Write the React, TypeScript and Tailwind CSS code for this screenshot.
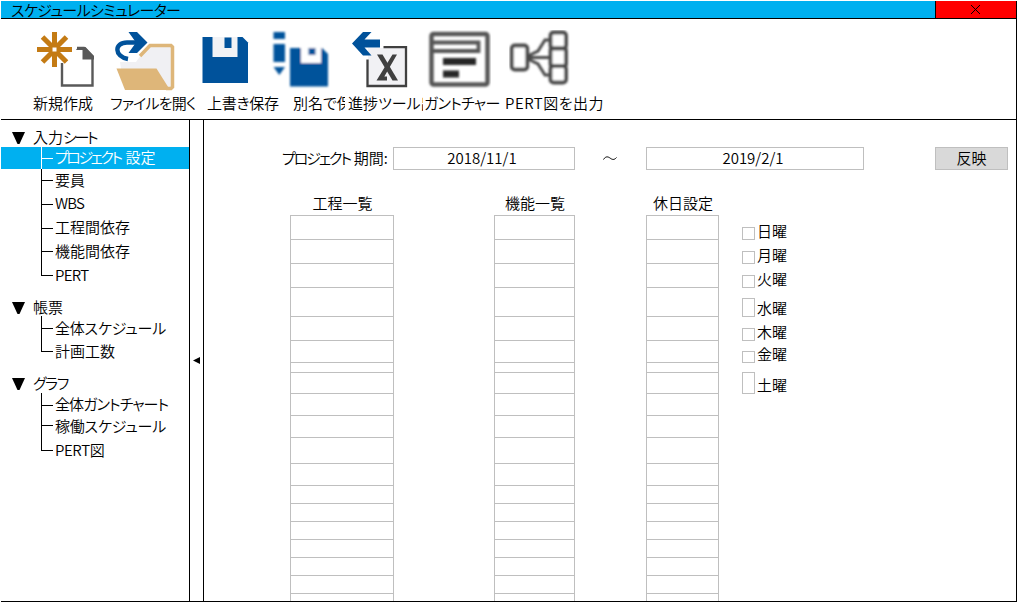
import type { ReactNode } from "react";

const NAVY = "#00529b";

function NewIcon() {
  return (
    <svg width="60" height="60" viewBox="36 30 60 60" className="block shrink-0">
      <path d="M77 48 H84 L92.500 56.500 V85.500 H62 V63" fill="none" stroke="#595959" strokeWidth="2.400" />
      <path d="M78 47 H85.500 L94 56 V59.500 H82.500 V50 H76 Z" fill="#595959" />
      <g stroke="#c47b14" strokeWidth="5">
        <path d="M54.500 32 V46 M54.500 53 V67 M37 49.500 H51 M58 49.500 H72" />
        <path d="M42.500 37 L52 46.500 M66.500 37 L57 46.500 M42.500 62 L52 52.500 M66.500 62 L57 52.500" />
      </g>
      <rect x="51.500" y="46.500" width="6" height="6" fill="#fff" stroke="#c47b14" strokeWidth="2" />
    </svg>
  );
}

function OpenIcon() {
  return (
    <svg width="62" height="62" viewBox="114 29 62 62" className="block shrink-0">
      <path d="M120 61 L136 61 L148 44 H172 V87 H124 Z" fill="#f0f0f3" />
      <path d="M140 55 L150 44.500 H171 L172.500 46 V86 L171 87.500 H166" fill="none" stroke="#deb679" strokeWidth="3.500" />
      <path d="M116.500 67.500 H156.500 L170 89 H125 Z" fill="#deb679" />
      <path d="M128 58 C114 55.500 114 41.500 127 41.500 H142" fill="none" stroke={NAVY} strokeWidth="4.400" />
      <path d="M128.500 31 H137 L147.500 41.500 L137 52 H128.500 L136 41.500 Z" fill={NAVY} />
    </svg>
  );
}

function SaveIcon() {
  return (
    <svg width="50" height="60" viewBox="201 30 50 60" className="block shrink-0">
      <path d="M202.500 37 H242.500 L248 42.500 V83 H202.500 Z" fill={NAVY} />
      <path d="M212.500 37 H237.500 V57 H212.500 Z" fill="#f1f2f5" />
      <rect x="224.500" y="37.500" width="7" height="10.500" fill={NAVY} />
    </svg>
  );
}

function SaveAsIcon() {
  return (
    <svg width="60" height="60" viewBox="271 30 60 60" className="block shrink-0">
      <defs>
        <filter id="saveSoft"><feGaussianBlur stdDeviation="0.9" /></filter>
      </defs>
      <g filter="url(#saveSoft)">
        <path d="M290 48 H322 L328 54 V86.500 H290 Z" fill={NAVY} />
        <path d="M301 46 H321 V63 H301 Z" fill="#fff" />
        <rect x="308.500" y="48" width="7" height="7" fill={NAVY} />
        <rect x="273.500" y="32" width="11.500" height="7" fill={NAVY} />
        <rect x="273.500" y="44" width="11.500" height="18" fill={NAVY} />
        <path d="M273.500 67 H285 L279.300 75 Z" fill={NAVY} />
      </g>
    </svg>
  );
}

function ProgressIcon() {
  return (
    <svg width="60" height="60" viewBox="351 30 60 60" className="block shrink-0">
      <rect x="368" y="48" width="38" height="38" fill="#f1f1f4" />
      <path d="M383.500 47.200 H406 V86 H367.500 V59.500" fill="none" stroke="#404040" strokeWidth="2.300" />
      <path d="M352 43.500 L363 32 H371.500 L364.500 39.500 H380 V47.500 H364.500 L371.500 55.500 H363 Z" fill={NAVY} />
      <path d="M377 54.500 H382.500 L398 80.500 H392.500 Z" fill="#404040" />
      <path d="M392.500 54.500 H397 L382 80.500 H376.500 Z M380 76.500 H387 V80.500 H378 Z" fill="#404040" />
    </svg>
  );
}

function GanttIcon() {
  return (
    <svg width="64" height="60" viewBox="427 30 64 60" className="block shrink-0">
      <defs>
        <filter id="ganttSoft"><feGaussianBlur stdDeviation="0.9" /></filter>
      </defs>
      <g filter="url(#ganttSoft)" fill="none" stroke="#555">
        <rect x="431.500" y="34" width="56" height="50.500" rx="2" strokeWidth="4.400" />
        <path d="M431 42.500 H478.500 V51 H431" strokeWidth="3.800" />
        <path d="M443 61.500 H476 M443 74 H459" strokeWidth="7" stroke="#262626" />
      </g>
    </svg>
  );
}

function PertIcon() {
  return (
    <svg width="62" height="60" viewBox="509 30 62 60" className="block shrink-0">
      <defs>
        <filter id="pertSoft"><feGaussianBlur stdDeviation="0.9" /></filter>
      </defs>
      <g filter="url(#pertSoft)" fill="none" stroke="#484848" strokeWidth="3.800">
        <path d="M528 56 L538 51 L545 40 H551 M528 57.500 H551 M528 59 L538 64 L545 75 H551" strokeWidth="3" />
        <rect x="511.800" y="45.500" width="15.500" height="24" rx="3" fill="#fff" />
        <rect x="550.500" y="32.500" width="15.500" height="16" rx="3" fill="#fff" />
        <rect x="550.500" y="48.500" width="15.500" height="17.500" rx="2" fill="#fff" />
        <rect x="550.500" y="66" width="15.500" height="16.500" rx="3" fill="#fff" />
      </g>
    </svg>
  );
}

type Tool = { label: string; icon: ReactNode; tile: string; iconPad: string; text: string };

const tools: Tool[] = [
  { label: "新規作成", icon: <NewIcon />, tile: "w-[77px]", iconPad: "pl-[3px]", text: "w-[77px]" },
  { label: "ファイルを開く", icon: <OpenIcon />, tile: "w-[90px]", iconPad: "pl-[4px]", text: "w-[90px] tracking-[-0.8px]" },
  { label: "上書き保存", icon: <SaveIcon />, tile: "w-[70px]", iconPad: "pl-px", text: "ml-[7px] w-[77px] tracking-[-0.3px]" },
  { label: "別名で保", icon: <SaveAsIcon />, tile: "w-[78px]", iconPad: "pl-px", text: "ml-[23px] w-[52px] overflow-hidden" },
  { label: "進捗ツール出", icon: <ProgressIcon />, tile: "w-[76px]", iconPad: "pl-[3px]", text: "w-[75px] overflow-hidden" },
  { label: "ガントチャー", icon: <GanttIcon />, tile: "w-[81px]", iconPad: "pl-[3px]", text: "w-[80px] tracking-[-0.7px]" },
  { label: "PERT図を出力", icon: <PertIcon />, tile: "w-[110px]", iconPad: "pl-[4px]", text: "w-[110px] tracking-[0.5px]" },
];

type Node = { label: ReactNode; row: string; stem: string; text?: string; selected?: boolean };
type Section = { label: ReactNode; head: string; nodes: Node[] };

const sections: Section[] = [
  {
    label: <>入力<span className="tracking-[-2.400px]">シート</span></>,
    head: "mt-[9px] h-[18px]",
    nodes: [
      {
        label: <><span className="mr-[5px] tracking-[-2.500px]">プロジェクト</span>設定</>,
        row: "h-[22px]",
        stem: "h-[12px]",
        selected: true,
      },
      { label: "要員", row: "h-[23px]", stem: "h-[12px]" },
      { label: "WBS", row: "h-[24px]", stem: "h-[13px]", text: "tracking-[-0.8px]" },
      { label: "工程間依存", row: "h-[24px]", stem: "h-[13px]" },
      { label: "機能間依存", row: "h-[24px]", stem: "h-[12px]" },
      { label: "PERT", row: "h-[24px]", stem: "h-[12px]", text: "tracking-[-0.7px]" },
    ],
  },
  {
    label: "帳票",
    head: "mt-[11px] h-[18px] -mb-px",
    nodes: [
      { label: "全体スケジュール", row: "h-[24px]", stem: "h-[13px]", text: "pt-[2px] tracking-[-0.2px]" },
      { label: "計画工数", row: "h-[24px]", stem: "h-[12px]" },
    ],
  },
  {
    label: <span className="tracking-[-1.400px]">グラフ</span>,
    head: "mt-[10px] h-[19px]",
    nodes: [
      { label: "全体ガントチャート", row: "h-[23px]", stem: "h-[13px]", text: "tracking-[-0.9px]" },
      { label: "稼働スケジュール", row: "h-[22px]", stem: "h-[10px]", text: "tracking-[-0.2px]" },
      { label: "PERT図", row: "h-[25px]", stem: "h-[13px]", text: "tracking-[-0.4px]" },
    ],
  },
];

const rowHeights = [
  "h-[24px]", "h-[24px]", "h-[24px]", "h-[29px]", "h-[24px]", "h-[22px]", "h-[10px]", "h-[21px]", "h-[22px]",
  "h-[22px]", "h-[26px]", "h-[22px]", "h-[18px]", "h-[18px]", "h-[18px]", "h-[18px]", "h-[18px]", "h-[18px]", "h-[8px]",
];

const lists = [
  { title: "工程一覧", width: "w-[104px]", gap: "" },
  { title: "機能一覧", width: "w-[81px]", gap: "ml-[100px]" },
  { title: "休日設定", width: "w-[73px]", gap: "ml-[71px]" },
];

const days = [
  { label: "日曜", row: "h-[24px]", box: "mt-[7px] h-[13px]", text: "mt-0" },
  { label: "月曜", row: "h-[24px]", box: "mt-[7px] h-[13px]", text: "mt-0" },
  { label: "火曜", row: "h-[24px]", box: "mt-[7px] h-[13px]", text: "mt-0" },
  { label: "水曜", row: "h-[29px]", box: "mt-[6px] h-[19px]", text: "mt-[5px]" },
  { label: "木曜", row: "h-[24px]", box: "mt-[7px] h-[13px]", text: "mt-0" },
  { label: "金曜", row: "h-[22px]", box: "mt-[6px] h-[12px]", text: "mt-[-2px]" },
  { label: "土曜", row: "h-[32px]", box: "mt-[5px] h-[22px]", text: "mt-[7px]" },
];

function TreeSection({ section }: { section: Section }) {
  return (
    <div>
      <div className={`flex items-center pl-[11px] ${section.head}`}>
        <svg width="13" height="12" viewBox="0 0 13 12" className="block">
          <path d="M0 0 H13 L7.500 12 H5.500 Z" fill="#000" />
        </svg>
        <span className="ml-[8px] pb-[2px]">{section.label}</span>
      </div>
      {section.nodes.map((node, i) => {
        const line = node.selected ? "border-white" : "border-black";
        return (
          <div
            key={i}
            className={`flex pl-[40px] ${node.row} ${node.selected ? "bg-[#00b0f0] text-white" : ""}`}
          >
            <div className="flex w-[12px] shrink-0 flex-col">
              <div className={`shrink-0 border-b border-l ${line} ${node.stem}`} />
              {i < section.nodes.length - 1 && <div className={`grow border-l ${line}`} />}
            </div>
            <span className={`ml-[2px] self-center pb-[2px] ${node.text ?? ""}`}>{node.label}</span>
          </div>
        );
      })}
    </div>
  );
}

export default function App() {
  return (
    <div className="h-[602px] w-[1017px] overflow-hidden bg-white pl-px pt-px font-['Noto_Sans_CJK_JP',sans-serif] text-[15px] leading-[18px] font-[350] whitespace-nowrap text-black [font-feature-settings:'palt']">
      <div className="flex h-[601px] flex-col border-r border-b border-black">
        <header className="flex h-[18px] shrink-0 border-b border-black bg-[#00b0f0]">
          <h1 className="grow pl-[10px] font-[350] tracking-[-0.600px]">スケジュールシミュレーター</h1>
          <button className="flex w-[81px] items-center justify-center border-l border-black bg-[#ff0000] pr-px" aria-label="閉じる">
            <svg width="9" height="9" viewBox="0 0 9 9" className="block">
              <path d="M0 0 L9 9 M9 0 L0 9" stroke="#000" strokeWidth="1" />
            </svg>
          </button>
        </header>

        <nav className="flex h-[101px] shrink-0 border-b border-black pl-[32px]">
          {tools.map((tool) => (
            <button key={tool.label} className={`flex shrink-0 flex-col items-start ${tool.tile}`}>
              <span className={`flex h-[72px] items-start pt-[11px] ${tool.iconPad}`}>{tool.icon}</span>
              <span className={`block text-left leading-[24px] ${tool.text}`}>{tool.label}</span>
            </button>
          ))}
        </nav>

        <div className="flex min-h-0 grow">
          <aside className="w-[189px] shrink-0 border-r border-black">
            {sections.map((section, i) => (
              <TreeSection key={i} section={section} />
            ))}
          </aside>

          <div className="flex w-[14px] shrink-0 items-center border-r border-black pl-[3px]">
            <svg width="7" height="7" viewBox="0 0 7 7" className="block">
              <path d="M0 3.500 L7 0 V7 Z" fill="#000" />
            </svg>
          </div>

          <main className="min-w-0 grow pt-[27px]">
            <div className="flex h-[23px] items-center pl-[78px]">
              <span className="w-[111px] pb-px">
                <span className="mr-[4px] tracking-[-2.100px]">プロジェクト</span>期間:
              </span>
              <div className="flex h-[23px] w-[182px] items-center justify-center border border-[#bfbfbf] pr-[4px] pb-px">2018/11/1</div>
              <span className="flex w-[71px] justify-center pr-[2px]">
                <svg width="14" height="5" viewBox="0 0 14 5" className="block">
                  <path d="M0.500 3.500 C3 -0.500 5.500 1 7 2 C9 3.500 11 4.500 13.500 1.500" fill="none" stroke="#000" />
                </svg>
              </span>
              <div className="flex h-[23px] w-[218px] items-center justify-center border border-[#bfbfbf] pr-[4px] pb-px">2019/2/1</div>
              <button className="ml-[71px] h-[23px] w-[73px] border border-[#bfbfbf] bg-[#d9d9d9] pb-px">反映</button>
            </div>

            <div className="flex pt-[24px] pl-[86px]">
              {lists.map((list) => (
                <section key={list.title} className={`shrink-0 ${list.width} ${list.gap}`}>
                  <h2 className="flex h-[21px] justify-center pl-px font-[350]">{list.title}</h2>
                  <div className="border-x border-[#bfbfbf]">
                    {rowHeights.map((height, i) => (
                      <div key={i} className={`border-t border-[#bfbfbf] ${height}`} />
                    ))}
                  </div>
                </section>
              ))}
              <div className="mt-[26px] ml-[23px]">
                {days.map((day) => (
                  <label key={day.label} className={`flex items-start ${day.row}`}>
                    <span className={`block w-[13px] border border-[#bfbfbf] ${day.box}`} />
                    <span className={`ml-[2px] ${day.text}`}>
                      <span className="block pt-[2px]">{day.label}</span>
                    </span>
                  </label>
                ))}
              </div>
            </div>
          </main>
        </div>
      </div>
    </div>
  );
}
